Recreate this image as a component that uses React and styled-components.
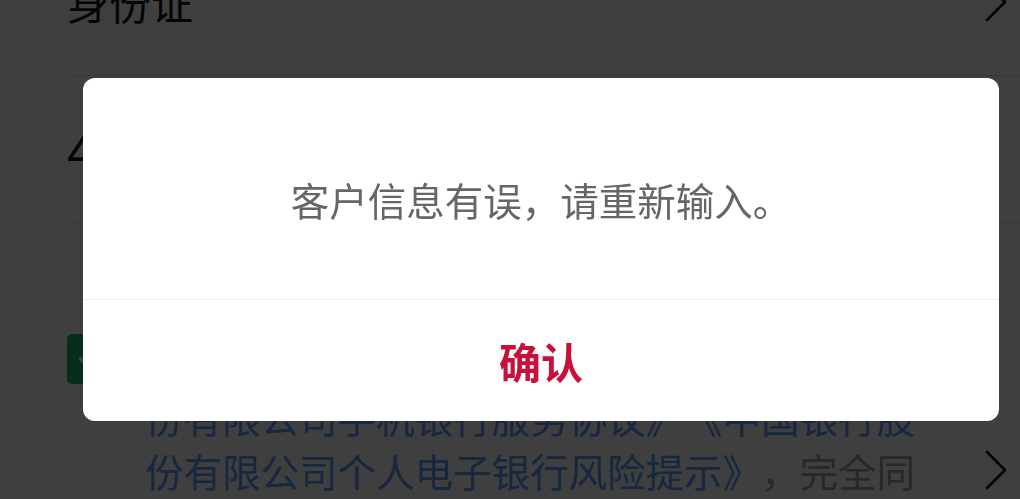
import React from 'react'
import styled, { createGlobalStyle } from 'styled-components'

const GlobalStyle = createGlobalStyle`
  html, body {
    margin: 0;
    padding: 0;
    height: 100%;
    overflow: hidden;
  }
  body {
    font-family: "Noto Sans CJK SC", "Noto Sans", sans-serif;
    text-spacing-trim: space-all;
  }
`

const Page = styled.div`
  position: relative;
  height: 100vh;
  background: #fff;
  overflow: hidden;
`

// page is scrolled a little, so the first row sits half off the top
const Content = styled.div`
  margin-top: -71px;
`

const FieldRow = styled.div`
  height: 146px;
  margin-left: 67px;
  padding-right: 13px;
  display: flex;
  align-items: center;
  justify-content: space-between;
  border-bottom: 1px solid #dcdcdc;
`

const Label = styled.span`
  font-size: 42px;
  line-height: 1;
  color: #111;
`

const Value = styled.span`
  font-size: 50px;
  line-height: 1;
  color: #111;
  letter-spacing: 1px;
`

const Agreement = styled.div`
  margin-top: 58px;
  padding: 0 13px 0 67px;
  display: flex;
  align-items: flex-start;
`

const CheckBox = styled.div`
  flex-shrink: 0;
  width: 50px;
  height: 50px;
  margin-top: 53px;
  margin-right: 28px;
  border-radius: 5px;
  background: #20b671;
  display: flex;
  align-items: center;
  justify-content: center;
`

const AgreeText = styled.p`
  margin: 0;
  flex: 1;
  font-size: 38.5px;
  line-height: 54px;
  white-space: nowrap;
  color: #a0a0a0;
`

const Link = styled.span`
  color: #5a9cff;
`

const ArrowBox = styled.div`
  align-self: ${p => (p.bottom ? 'flex-end' : 'center')};
  height: ${p => (p.bottom ? '54px' : 'auto')};
  display: flex;
  align-items: center;
`

const Overlay = styled.div`
  position: fixed;
  inset: 0;
  background: rgba(0, 0, 0, 0.753);
  display: flex;
  align-items: center;
  padding: 0 21px 0 83px;
`

const Dialog = styled.div`
  flex: 1;
  background: #fff;
  border-radius: 12px;
  overflow: hidden;
`

const Message = styled.div`
  padding: 94px 20px 73px;
  text-align: center;
  font-size: 38.5px;
  line-height: 54px;
  color: #666;
`

const Footer = styled.div`
  height: 121px;
  border-top: 1px solid #eeeeee;
  display: flex;
  align-items: center;
  justify-content: center;
`

const ConfirmButton = styled.button`
  border: none;
  background: none;
  padding: 0;
  font-family: inherit;
  font-size: 42px;
  font-weight: 700;
  line-height: 1;
  color: #c8103a;
  cursor: pointer;
`

function Chevron() {
  return (
    <svg width="22" height="40" viewBox="0 0 22 40">
      <polyline points="2,2 20,20 2,38" fill="none" stroke="#111" strokeWidth="2.6" strokeLinecap="round" strokeLinejoin="round" />
    </svg>
  )
}

function Check() {
  return (
    <svg width="32" height="32" viewBox="0 0 32 32">
      <polyline points="5,16 13,24 27,9" fill="none" stroke="#fff" strokeWidth="4" strokeLinecap="round" strokeLinejoin="round" />
    </svg>
  )
}

export default function App() {
  return (
    <>
      <GlobalStyle />
      <Page>
        <Content>
          <FieldRow>
            <Label>身份证</Label>
            <Chevron />
          </FieldRow>
          <FieldRow>
            <Value>410526199001012345</Value>
          </FieldRow>
          <Agreement>
            <CheckBox><Check /></CheckBox>
            <AgreeText>
              本人已阅读并同意<Link>《中国银行股份有限</Link><br />
              <Link>公司个人网上银行服务协议》《中国银行股</Link><br />
              <Link>份有限公司手机银行服务协议》《中国银行股</Link><br />
              <Link>份有限公司个人电子银行风险提示》</Link>，完全同
            </AgreeText>
            <ArrowBox bottom>
              <Chevron />
            </ArrowBox>
          </Agreement>
        </Content>
        <Overlay>
          <Dialog>
            <Message>客户信息有误，请重新输入。</Message>
            <Footer>
              <ConfirmButton>确认</ConfirmButton>
            </Footer>
          </Dialog>
        </Overlay>
      </Page>
    </>
  )
}
